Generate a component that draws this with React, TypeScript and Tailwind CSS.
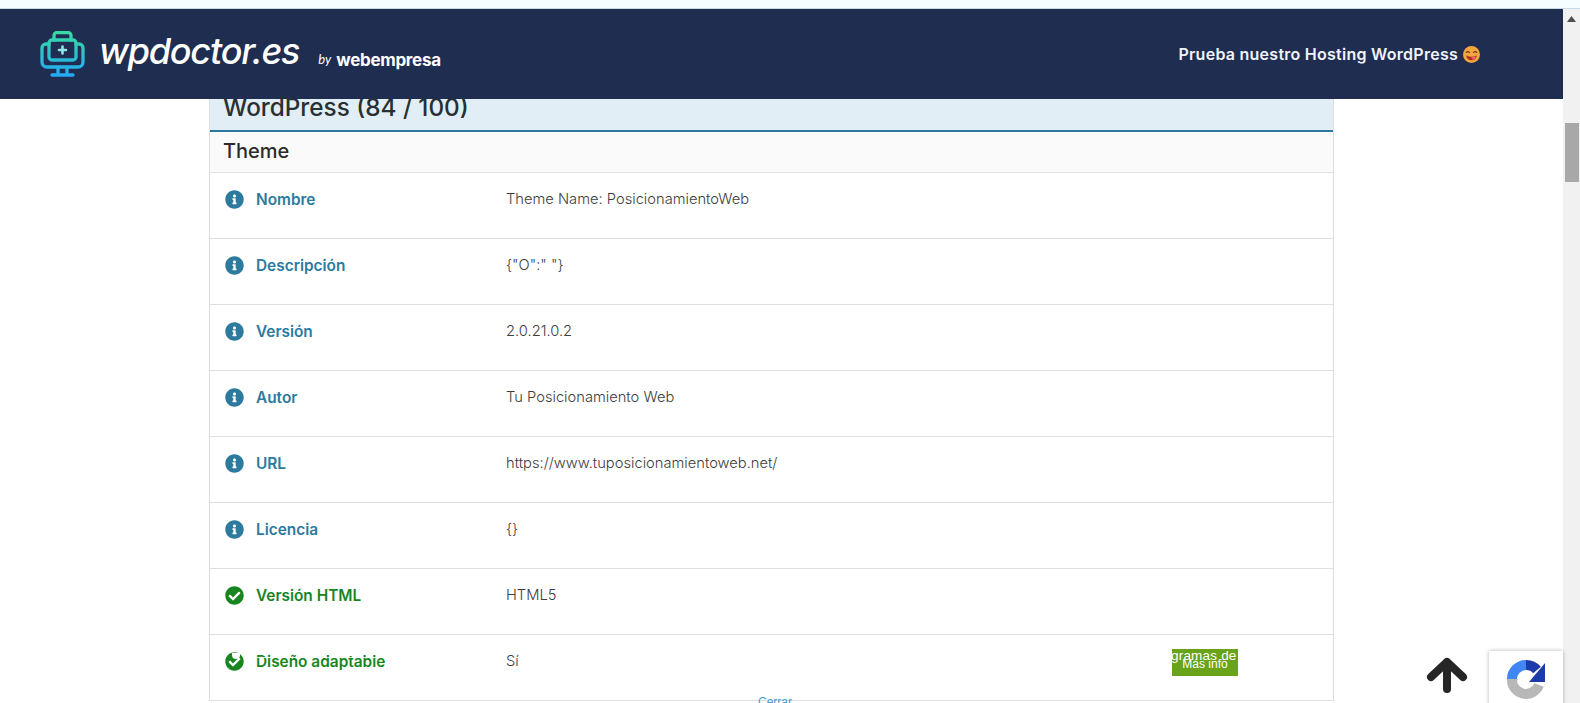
import { FaCheckCircle, FaInfoCircle } from "react-icons/fa";

const rows = [
  { label: "Nombre", value: "Theme Name: PosicionamientoWeb", ok: false },
  { label: "Descripción", value: '{"O":" "}', ok: false },
  { label: "Versión", value: "2.0.21.0.2", ok: false },
  { label: "Autor", value: "Tu Posicionamiento Web", ok: false },
  { label: "URL", value: "https://www.tuposicionamientoweb.net/", ok: false },
  { label: "Licencia", value: "{}", ok: false },
  { label: "Versión HTML", value: "HTML5", ok: true },
  { label: "Diseño adaptable", value: "Sí", ok: true },
];

const Logo = () => (
  <svg width="45" height="46" viewBox="0 0 45 46" fill="none" className="shrink-0">
    <defs>
      <linearGradient id="logoGrad" gradientUnits="userSpaceOnUse" x1="0" y1="0" x2="0" y2="46">
        <stop offset="0" stopColor="#38dba0" />
        <stop offset="1" stopColor="#22a8f8" />
      </linearGradient>
    </defs>
    <g stroke="url(#logoGrad)" strokeWidth="3.300" strokeLinecap="round" strokeLinejoin="round">
      <path d="M14 9V4.500a3 3 0 0 1 3-3h11a3 3 0 0 1 3 3V9" />
      <rect x="9" y="9" width="27" height="20" rx="3" />
      <path d="M9 13H6a4 4 0 0 0-4 4v14a5 5 0 0 0 5 5h31a5 5 0 0 0 5-5V17a4 4 0 0 0-4-4h-3" />
      <path d="M18 37v6M27 37v6M12 44h21" />
      <path d="M22.500 15.500v7M19 19h7" stroke="#8fe6e6" strokeWidth="2.600" />
    </g>
  </svg>
);

const Emoji = () => (
  <svg width="17" height="17" viewBox="0 0 17 17" className="shrink-0">
    <circle cx="8.500" cy="8.500" r="8.500" fill="#f2a63c" />
    <path d="M3.200 6.400q1.600-1.600 3.200 0M10.600 6.400q1.600-1.600 3.200 0" stroke="#6b3a18" strokeWidth="1.200" fill="none" strokeLinecap="round" />
    <path d="M3 9.200q5.500 3 11 0q-1 5-5.500 5T3 9.200z" fill="#a8321f" />
    <path d="M8.500 11.200l4-.8q.6 2.600-1.600 3.200t-2.400-2.400z" fill="#ee5b6a" />
  </svg>
);

const Recaptcha = () => (
  <svg width="42" height="42" viewBox="0 0 42 42" fill="none">
    <path d="M6 21A14 14 0 0 0 33 27" stroke="#b8b8b8" strokeWidth="10" />
    <path d="M1 21L6 29L12 21z" fill="#b8b8b8" />
    <path d="M6 21A14 14 0 0 1 20 7" stroke="#4285f4" strokeWidth="10" />
    <path d="M20 7A14 14 0 0 1 31 12" stroke="#1c3aa9" strokeWidth="10" />
    <path d="M39 5V24H23z" fill="#1c3aa9" />
  </svg>
);

export default function App() {
  return (
    <div className="h-[703px] w-[1580px] overflow-hidden bg-white font-['Inter',sans-serif]">
      <div className="h-[9px] bg-[#f5fdfe] border-b border-[#c5dbe6]" />
      <div className="flex h-[694px]">
        <div className="relative flex-1 min-w-0">
          <header className="flex h-[90px] items-center justify-between bg-[#1f2d50] pl-[40px] pr-[83px] text-white">
            <div className="flex items-center">
              <Logo />
              <span className="ml-[14px] -mt-[7px] text-[36px] leading-none font-medium italic tracking-[-1.2px]">wpdoctor.es</span>
              <span className="ml-[19px] mt-[12px] text-[13px] italic font-['Lato',sans-serif]">by</span>
              <span className="ml-[5px] mt-[12px] text-[17px] font-bold leading-none tracking-[-0.3px]">webempresa</span>
            </div>
            <div className="flex items-center gap-[5px] text-[16px] font-semibold tracking-[0.26px] text-[#f0f3fa]">
              <span>Prueba nuestro Hosting WordPress</span>
              <Emoji />
            </div>
          </header>

          <section className="ml-[209px] mr-[229px] border-x border-[#dedede]">
            <div className="flex h-[33px] items-end overflow-hidden border-b-2 border-[#2a7a9f] bg-[#e1eef5] pb-[8px] pl-[13px]">
              <h2 className="text-[24.3px] leading-[30px] font-medium whitespace-nowrap text-[#2a2f33]">WordPress (84 / 100)</h2>
            </div>
            <div className="flex h-[41px] items-center border-b border-[#e2e2e2] bg-[#fbfafa] pb-[3px] pl-[13px]">
              <h3 className="text-[20px] font-medium text-[#2b2b2b]">Theme</h3>
            </div>
            {rows.map((row) => (
              <div key={row.label} className="flex h-[66px] border-b border-[#dfdfdf] pt-[16px]">
                <div className={`flex w-[296px] items-start pl-[15px] text-[15.4px] leading-[22px] font-semibold ${row.ok ? "text-[#17861f]" : "text-[#2c7a9e]"}`}>
                  {row.ok ? <FaCheckCircle className="mt-[1px] size-[19px] shrink-0" /> : <FaInfoCircle className="mt-[1px] size-[19px] shrink-0" />}
                  <span className="ml-[12px]">{row.label}</span>
                </div>
                <div className="text-[14.7px] leading-[20px] font-light text-[#3d3d3d]">{row.value}</div>
              </div>
            ))}
          </section>

          {/* white ticker text bleeding over the last row */}
          <div className="absolute left-[232px] top-[644px] h-[6px] w-[8px] rounded-b-full bg-white" />
          <div className="absolute left-[256px] top-[648px] h-[1px] w-[145px] bg-white/80" />

          <div className="absolute left-[1172px] top-[640px] h-[27px] w-[66px] overflow-hidden bg-[#68a31a] text-center font-['Liberation_Sans',sans-serif] text-white">
            <div className="-ml-[1px] w-[200px] text-left text-[13.5px] leading-[13px] tracking-[0.2px] whitespace-nowrap">gramas de a</div>
            <div className="-mt-[4px] text-[12px] leading-[12px]">Más info</div>
          </div>
          <div className="absolute left-[758px] top-[686px] font-['Liberation_Sans',sans-serif] text-[12px] leading-[14px] text-[#4a9bd0]">Cerrar</div>
          <svg width="42" height="38" viewBox="0 0 42 38" fill="none" className="absolute left-[1426px] top-[647px]">
            <path d="M21 33V6M5 21L21 6l16 15" stroke="#262626" strokeWidth="8" strokeLinecap="round" strokeLinejoin="round" />
          </svg>
          <div className="absolute left-[1489px] top-[642px] h-[60px] w-[74px] bg-white pl-[17px] pt-[7px] shadow-[0_0_4px_rgba(0,0,0,0.3)]">
            <Recaptcha />
          </div>
        </div>

        <aside className="flex w-[17px] flex-col items-center bg-[#f1f1f1]">
          <svg width="9" height="6" viewBox="0 0 9 6" className="mt-[7px]">
            <path d="M4.500 0L9 6H0z" fill="#505050" />
          </svg>
          <div className="mt-[101px] h-[59px] w-[14px] bg-[#a8a8a8]" />
        </aside>
      </div>
    </div>
  );
}
